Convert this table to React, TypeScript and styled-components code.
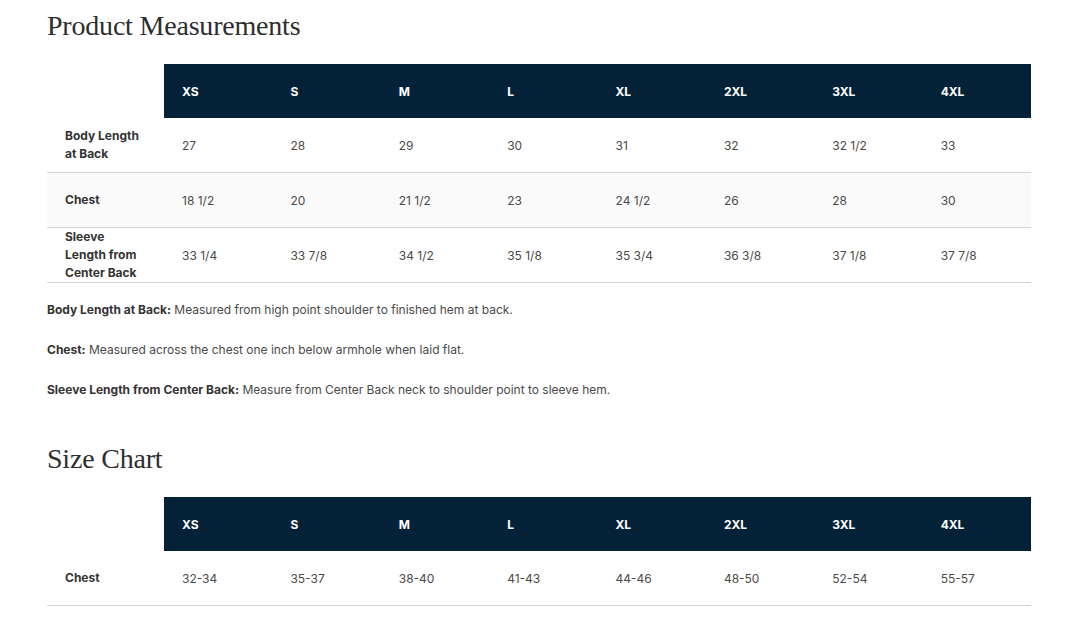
import styled, { createGlobalStyle } from "styled-components";

const GlobalStyle = createGlobalStyle`
  body {
    margin: 8px;
    background: #ffffff;
    font-family: Inter, "Liberation Sans", sans-serif;
    color: #333333;
  }
`;

const Page = styled.main`
  padding: 1px 52px 0 39px;
`;

const Heading = styled.h2<{ $spaced?: boolean }>`
  margin: ${(p) => (p.$spaced ? "42px" : "0")} 0 21px;
  font-family: "Liberation Serif", "DejaVu Serif", serif;
  font-weight: 400;
  font-size: 28px;
  line-height: 34px;
  color: #2e2e2e;
  letter-spacing: -0.2px;
`;

const Table = styled.table`
  width: 100%;
  border-collapse: collapse;
  table-layout: fixed;
  font-size: 12px;
`;

const HeadCell = styled.th<{ $blank?: boolean }>`
  height: 54px;
  padding: 0 18px;
  text-align: left;
  font-weight: 700;
  color: #ffffff;
  background: ${(p) => (p.$blank ? "transparent" : "#032238")};
`;

const Row = styled.tr<{ $shade?: boolean }>`
  background: ${(p) => (p.$shade ? "#fafafa" : "transparent")};
  border-bottom: 1px solid #d4d4d4;
`;

const Label = styled.th`
  height: 54px;
  padding: 0 18px;
  text-align: left;
  font-weight: 700;
  line-height: 18px;
  color: #333333;
`;

const Cell = styled.td`
  padding: 0 18px;
  color: #4a4a4a;
`;

const Notes = styled.div`
  margin-top: 17px;
  font-size: 12px;
  line-height: 20px;
  color: #4a4a4a;

  p {
    margin: 0 0 20px;
  }
  p:last-child {
    margin-bottom: 0;
  }
  b {
    color: #333333;
  }
`;

const sizes = ["XS", "S", "M", "L", "XL", "2XL", "3XL", "4XL"];

type Measure = { label: string; values: string[] };

const measurements: Measure[] = [
  { label: "Body Length at Back", values: ["27", "28", "29", "30", "31", "32", "32 1/2", "33"] },
  { label: "Chest", values: ["18 1/2", "20", "21 1/2", "23", "24 1/2", "26", "28", "30"] },
  {
    label: "Sleeve Length from Center Back",
    values: ["33 1/4", "33 7/8", "34 1/2", "35 1/8", "35 3/4", "36 3/8", "37 1/8", "37 7/8"],
  },
];

const chart: Measure[] = [
  { label: "Chest", values: ["32-34", "35-37", "38-40", "41-43", "44-46", "48-50", "52-54", "55-57"] },
];

function SizeTable({ rows, shaded }: { rows: Measure[]; shaded?: boolean }) {
  return (
    <Table>
      <colgroup>
        <col style={{ width: 117 }} />
        {sizes.map((s) => (
          <col key={s} />
        ))}
      </colgroup>
      <thead>
        <tr>
          <HeadCell $blank />
          {sizes.map((s) => (
            <HeadCell key={s}>{s}</HeadCell>
          ))}
        </tr>
      </thead>
      <tbody>
        {rows.map((r, i) => (
          <Row key={r.label} $shade={shaded && i % 2 === 1}>
            <Label>{r.label}</Label>
            {r.values.map((v, j) => (
              <Cell key={j}>{v}</Cell>
            ))}
          </Row>
        ))}
      </tbody>
    </Table>
  );
}

export default function App() {
  return (
    <>
      <GlobalStyle />
      <Page>
        <Heading>Product Measurements</Heading>
        <SizeTable rows={measurements} shaded />
        <Notes>
          <p>
            <b>Body Length at Back:</b> Measured from high point shoulder to finished hem at back.
          </p>
          <p>
            <b>Chest:</b> Measured across the chest one inch below armhole when laid flat.
          </p>
          <p>
            <b>Sleeve Length from Center Back:</b> Measure from Center Back neck to shoulder point to
            sleeve hem.
          </p>
        </Notes>
        <Heading $spaced>Size Chart</Heading>
        <SizeTable rows={chart} />
      </Page>
    </>
  );
}
